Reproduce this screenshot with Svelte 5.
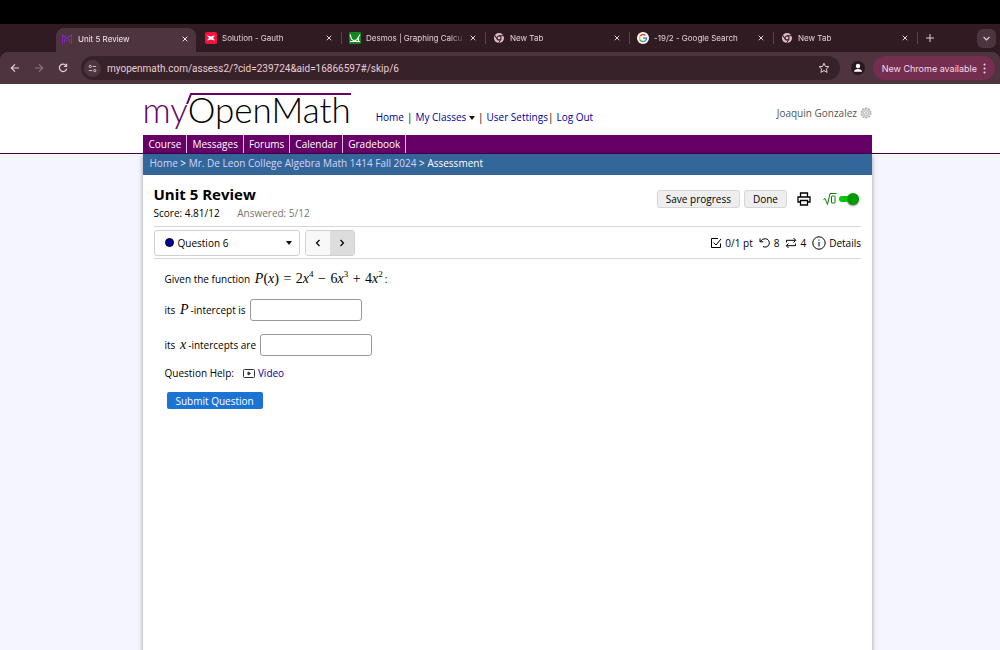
<script lang="ts">
	type Tab = {
		id: number;
		title: string;
		icon: 'mom' | 'gauth' | 'desmos' | 'chrome' | 'google';
	};

	const tabs: Tab[] = [
		{ id: 1, title: 'Unit 5 Review', icon: 'mom' },
		{ id: 2, title: 'Solution - Gauth', icon: 'gauth' },
		{ id: 3, title: 'Desmos | Graphing Calcu', icon: 'desmos' },
		{ id: 4, title: 'New Tab', icon: 'chrome' },
		{ id: 5, title: '-19/2 - Google Search', icon: 'google' },
		{ id: 6, title: 'New Tab', icon: 'chrome' }
	];

	const menu = ['Course', 'Messages', 'Forums', 'Calendar', 'Gradebook'];

	let activeTab = $state(1);
	let address = $state('myopenmath.com/assess2/?cid=239724&aid=16866597#/skip/6');
	let question = $state(6);
	let yIntercept = $state('');
	let xIntercepts = $state('');
	let mathEntry = $state(true);
</script>

<div class="screen-top"></div>

<div class="browser">
	<div class="tab-strip">
		{#each tabs as tab (tab.id)}
			<div class="tab" class:active={tab.id === activeTab}>
				<button class="tab-title" onclick={() => (activeTab = tab.id)}>
					<svg class="favicon" viewBox="0 0 12 12" aria-hidden="true">
						{#if tab.icon === 'mom'}
							<path d="M1.500 11V2L6 6l4.500-4v9M3.500 10V6L6 8.500 8.500 6v4" fill="none" stroke="#8a22b8" />
							<path d="M1 1.500l5 3.500 5-3.500" fill="none" stroke="#5b3fc0" stroke-width=".7" />
						{:else if tab.icon === 'gauth'}
							<rect width="12" height="12" rx="2" fill="#f5123f" />
							<path d="M2 3.500c2 0 3 1 4 1s2-1 4-1L8 6l2 2.500c-2 0-3-1-4-1s-2 1-4 1L4 6z" fill="#fff" />
						{:else if tab.icon === 'desmos'}
							<rect width="12" height="12" rx="1" fill="#12891f" />
							<path d="M1 2.500l1.500 4.500L5 9l3-1.500 3-5M1 9.500h10M9.500 5v4.500" fill="none" stroke="#fff" stroke-width="1.100" />
						{:else if tab.icon === 'chrome'}
							<circle cx="6" cy="6" r="5" fill="#dfbcc8" />
							<circle cx="6" cy="6" r="2" fill="#dfbcc8" stroke="#311b23" stroke-width="1.100" />
							<path d="M6 3.700h5M4 7.100L1.600 3M8 7.100L5.600 11" stroke="#311b23" stroke-width="1" />
						{:else}
							<circle cx="6" cy="6" r="6" fill="#fff" />
							<g fill="none" stroke-width="1.500">
								<path d="M8.500 3.500A3.500 3.500 0 0 0 3 4.200" stroke="#ea4335" />
								<path d="M3 4.200a3.500 3.500 0 0 0 0 3.600" stroke="#fbbc05" />
								<path d="M3 7.800a3.500 3.500 0 0 0 5.300.9" stroke="#34a853" />
								<path d="M8.300 8.700A3.500 3.500 0 0 0 9.500 6H6" stroke="#4285f4" />
							</g>
						{/if}
					</svg>
					<span>{tab.title}</span>
				</button>
				<button class="tab-close" aria-label="Close tab">
					<svg viewBox="0 0 6 6"><path d="M.7.7l4.600 4.600M5.300.7L.7 5.300" /></svg>
				</button>
			</div>
		{/each}
		<button class="new-tab" aria-label="New tab">
			<svg viewBox="0 0 8 8"><path d="M4 0v8M0 4h8" /></svg>
		</button>
		<button class="tab-search" aria-label="Search tabs">
			<svg viewBox="0 0 6 6"><path d="M.5 1.700L3 4.200l2.500-2.500" /></svg>
		</button>
	</div>

	<div class="toolbar">
		<button class="tool" aria-label="Back">
			<svg viewBox="0 0 10 10"><path d="M9 5H1.500M5 1.300L1.300 5 5 8.700" /></svg>
		</button>
		<button class="tool dim" aria-label="Forward">
			<svg viewBox="0 0 10 10"><path d="M1 5h7.500M5 1.300L8.700 5 5 8.700" /></svg>
		</button>
		<button class="tool" aria-label="Reload">
			<svg viewBox="0 0 10 10"><path d="M8.300 3A3.700 3.700 0 1 0 8.700 5.600M8.600.8v2.700H5.900" /></svg>
		</button>
		<div class="address">
			<button class="site-info" aria-label="View site information">
				<svg viewBox="0 0 10 10">
					<circle cx="2.500" cy="2.700" r="1.200" /><path d="M5.200 2.700H9M1 7.300h3.800" /><circle cx="7.500" cy="7.300" r="1.200" />
				</svg>
			</button>
			<input type="text" aria-label="Address" bind:value={address} />
			<button class="star" aria-label="Bookmark this tab">
				<svg viewBox="0 0 12 12"><path d="M6 1.200l1.400 3.200 3.500.3-2.600 2.300.8 3.400L6 8.600l-3.100 1.800.8-3.400L1.100 4.700l3.500-.3z" /></svg>
			</button>
		</div>
		<button class="profile" aria-label="Profile">
			<svg viewBox="0 0 14 14">
				<circle cx="7" cy="7" r="7" fill="#2b171e" />
				<circle cx="7" cy="5" r="2.200" fill="#fff" />
				<path d="M3 10.800c0-2 2-2.900 4-2.900s4 .9 4 2.900z" fill="#fff" />
			</svg>
		</button>
		<button class="update">
			New Chrome available
			<svg viewBox="0 0 3 11"><circle cx="1.500" cy="1.500" r="1" /><circle cx="1.500" cy="5.500" r="1" /><circle cx="1.500" cy="9.500" r="1" /></svg>
		</button>
	</div>
</div>

<div class="page">
	<header>
		<div class="wrap">
			<div class="head-row">
				<a class="logo" href="#home">
					<span>my</span>OpenMath
					<svg viewBox="0 0 165 11" aria-hidden="true"><path d="M1 11L5 1h160" /></svg>
				</a>
				<nav class="links">
					<a href="#home">Home</a><i>|</i>
					<a href="#classes">My Classes <b class="caret"></b></a><i>|</i>
					<a href="#settings">User Settings</a><i class="tight">|</i>
					<a href="#logout">Log Out</a>
				</nav>
				<div class="user">
					Joaquin Gonzalez
					<svg viewBox="0 0 12 12" aria-hidden="true">
						<circle cx="6" cy="6" r="4.800" fill="#d6d8d6" stroke="#b2b5b2" stroke-width="1.400" stroke-dasharray="2 1" />
						<circle cx="6" cy="6" r="2.500" fill="#ededed" stroke="#aeb1ae" stroke-width=".7" />
						<circle cx="6" cy="6" r="1" fill="#bfc2bf" />
					</svg>
				</div>
			</div>
			<nav class="menu">
				{#each menu as item}
					<a href="#{item.toLowerCase()}">{item}</a>
				{/each}
			</nav>
		</div>
	</header>

	<main class="wrap">
		<nav class="crumbs">
			<a href="#home">Home</a> &gt; <a href="#course">Mr. De Leon College Algebra Math 1414 Fall 2024</a> &gt; Assessment
		</nav>

		<div class="assess">
			<div class="title-row">
				<div class="title">
					<h1>Unit 5 Review</h1>
					<p>Score: 4.81/12 <span>Answered: 5/12</span></p>
				</div>
				<div class="actions">
					<button class="plain">Save progress</button>
					<button class="plain">Done</button>
					<button class="print" aria-label="Print">
						<svg viewBox="0 0 14 14">
							<path d="M3.500 5V1h7v4M3.500 10H1V5h12v5h-2.500M3.500 8.500h7V13h-7z" />
						</svg>
					</button>
					<label class="entry">
						<input type="checkbox" aria-label="Equation editor" bind:checked={mathEntry} />
						<svg class="root" viewBox="0 0 14 14" aria-hidden="true">
							<path d="M.5 7.500L2 6.500l2.500 6L7 1.500h6.500" />
							<rect x="8.500" y="4" width="3.500" height="7" rx=".5" />
						</svg>
						<span class="track"></span>
					</label>
				</div>
			</div>

			<div class="question-row">
				<div class="picker">
					<span class="dot"></span>
					<select aria-label="Question" bind:value={question}>
						{#each Array(12) as _, i}
							<option value={i + 1}>Question {i + 1}</option>
						{/each}
					</select>
					<b class="caret"></b>
				</div>
				<div class="steps">
					<button aria-label="Previous question" onclick={() => (question = Math.max(1, question - 1))}>
						<svg viewBox="0 0 6 8"><path d="M4.500 1L1.500 4l3 3" /></svg>
					</button>
					<button class="next" aria-label="Next question" onclick={() => (question = Math.min(12, question + 1))}>
						<svg viewBox="0 0 6 8"><path d="M1.500 1l3 3-3 3" /></svg>
					</button>
				</div>
				<div class="info">
					<span>
						<svg viewBox="0 0 12 12"><path d="M10.500 6.500v4h-9v-9H8M3.500 5.500L6 8l5-6" /></svg>
						0/1 pt
					</span>
					<span>
						<svg viewBox="0 0 12 12"><path d="M1 1.500v3.300h3.300M1.300 4.500Q3 1.700 6.300 1.700A4.200 4.200 0 1 1 4 9.500" /></svg>
						8
					</span>
					<span>
						<svg viewBox="0 0 12 12"><path d="M1.500 5.500V3.300h9M8.500 1l2.200 2.300-2.200 2.200M10.500 6.500v2.200h-9M3.500 6.500L1.300 8.700l2.200 2.300" /></svg>
						4
					</span>
					<button class="details">
						<svg viewBox="0 0 14 14"><circle cx="7" cy="7" r="6.200" /><path d="M7 6v4.500M7 3.500v1.200" /></svg>
						Details
					</button>
				</div>
			</div>

			<form class="question" onsubmit={(e) => e.preventDefault()}>
				<p>
					Given the function
					<span class="math"
						><em>P</em>(<em>x</em>) <b>=</b> 2<em>x</em><sup>4</sup> <b>−</b> 6<em>x</em><sup>3</sup> <b>+</b> 4<em>x</em><sup>2</sup></span
					>:
				</p>
				<div class="answer">
					<label for="p-int">its <span class="math"><em>P</em></span>-intercept is</label>
					<input id="p-int" type="text" bind:value={yIntercept} />
				</div>
				<div class="answer">
					<label for="x-int">its <span class="math"><em>x</em></span>-intercepts are</label>
					<input id="x-int" type="text" bind:value={xIntercepts} />
				</div>
				<div class="help">
					<span>Question Help:</span>
					<a href="#video">
						<svg viewBox="0 0 12 9"><rect x=".5" y=".5" width="11" height="8" rx="1" /><path d="M5 3v3l2.500-1.500z" fill="#333" /></svg>
						Video
					</a>
				</div>
				<button class="submit">Submit Question</button>
			</form>
		</div>
	</main>
</div>

<style>
	:global(body) {
		background: #f5f5ff;
	}

	:global(#app) {
		min-height: 100vh;
		display: flex;
		flex-direction: column;
	}

	button,
	input,
	select {
		font: inherit;
		color: inherit;
		margin: 0;
		padding: 0;
		border: 0;
		background: none;
	}

	button {
		cursor: pointer;
	}

	svg {
		display: block;
		flex: none;
		fill: none;
		stroke: currentColor;
	}

	.screen-top {
		height: 24px;
		background: #000;
	}

	/* Browser chrome */
	.browser {
		font-family: Inter, sans-serif;
		font-size: 8px;
		color: #e8cdd6;
		background: #311b23;
	}

	.tab-strip {
		display: flex;
		align-items: center;
		height: 28px;
		padding: 0 4px 0 54px;
	}

	.tab {
		flex: 0 1 144px;
		min-width: 0;
		display: flex;
		align-items: center;
		gap: 4px;
		height: 12px;
		padding: 0 9px 0 7px;
		box-sizing: border-box;
		border-right: 1px solid #5c424c;
	}

	.tab.active {
		height: 24px;
		margin: 4px 2px 0;
		flex-basis: 140px;
		padding: 0 8px 3px 5px;
		border: 0;
		border-radius: 8px 8px 0 0;
		background: #4e343e;
		color: #fbe6ee;
	}

	.tab-title {
		flex: 1;
		min-width: 0;
		display: flex;
		align-items: center;
		gap: 5px;
		text-align: left;
	}

	.tab-title span {
		flex: 1;
		white-space: nowrap;
		mask-image: linear-gradient(to right, #000 84%, transparent);
	}

	.favicon {
		width: 12px;
		height: 12px;
		stroke: none;
	}

	.tab-close svg {
		width: 6px;
		height: 6px;
	}

	.new-tab {
		margin-left: 8px;
	}

	.new-tab svg {
		width: 8px;
		height: 8px;
	}

	.tab-search {
		margin-left: auto;
		padding: 6px;
		border-radius: 6px;
		background: #4e343e;
	}

	.tab-search svg {
		width: 7px;
		height: 7px;
	}

	.toolbar {
		display: flex;
		align-items: center;
		height: 32px;
		padding: 0 5px 0 10px;
		gap: 14px;
		border-radius: 8px 8px 0 0;
		background: #4e343e;
	}

	.tool svg {
		width: 10px;
		height: 10px;
		stroke-width: 1.2;
	}

	.dim {
		color: #90747f;
	}

	.address {
		flex: 1;
		display: flex;
		align-items: center;
		gap: 6px;
		height: 24px;
		margin-left: -1px;
		padding: 0 10px 0 3px;
		border-radius: 12px;
		background: #38222a;
	}

	.address input {
		flex: 1;
		min-width: 0;
		font-family: Roboto, sans-serif;
		font-size: 10px;
		outline: none;
	}

	.site-info {
		padding: 4px;
		border-radius: 50%;
		background: #4e343e;
	}

	.site-info svg {
		width: 9px;
		height: 9px;
	}

	.star svg {
		width: 12px;
		height: 12px;
	}

	.profile {
		margin-left: -3px;
	}

	.profile svg {
		width: 14px;
		height: 14px;
		stroke: none;
	}

	.update {
		display: flex;
		align-items: center;
		gap: 6px;
		height: 24px;
		margin-left: -6px;
		padding: 0 9px;
		border-radius: 12px;
		background: #732e50;
		color: #f9d8e6;
		font-size: 9px;
	}

	.update svg {
		width: 3px;
		height: 11px;
		fill: currentColor;
		stroke: none;
	}

	/* Page */
	.page {
		flex: 1;
		display: flex;
		flex-direction: column;
		font-family: 'Trebuchet MS', 'Open Sans', sans-serif;
		font-size: 10px;
		font-weight: 500;
		color: #000;
	}

	a {
		color: #0000a0;
		text-decoration: none;
	}

	header {
		background: #fff;
		border-bottom: 1px solid #3d0040;
	}

	.wrap {
		margin: 0 12.8% 0 14.25%;
	}

	.head-row {
		display: flex;
		height: 51px;
	}

	.logo {
		position: relative;
		font: 300 35px/50px Lato, sans-serif;
		color: #000;
	}

	.logo span {
		color: #606;
	}

	.logo svg {
		position: absolute;
		top: 9px;
		right: 0;
		width: 165px;
		height: 11px;
		stroke: #606;
		stroke-width: 2;
	}

	.links {
		display: flex;
		gap: 3px;
		margin-left: 25px;
		padding-top: 26px;
	}

	.links i {
		font-style: normal;
	}

	.links .tight {
		margin-left: -3px;
	}

	.caret {
		display: inline-block;
		border: 3px solid transparent;
		border-top: 4px solid #111;
		border-bottom: 0;
		vertical-align: middle;
	}

	.user {
		display: flex;
		gap: 3px;
		margin-left: auto;
		padding-top: 22px;
		color: #555;
	}

	.user svg {
		width: 12px;
		height: 12px;
		margin-top: 1px;
		stroke: none;
	}

	.menu {
		display: flex;
		height: 18px;
		padding-left: 1px;
		background: #606;
		line-height: 18px;
	}

	.menu a {
		padding: 0 5px;
		border-right: 1px solid #d9c2d9;
		color: #fff;
	}

	main {
		flex: 1;
		background: #fff;
		box-shadow: 0 3px 4px 1px #b4b4bc;
		clip-path: inset(0 -8px);
	}

	.crumbs {
		height: 21px;
		padding-left: 7px;
		background: #369;
		color: #fff;
		line-height: 18px;
	}

	.crumbs a {
		color: #d5d5ff;
	}

	.assess {
		padding: 0 11px;
	}

	.title-row {
		display: flex;
		justify-content: space-between;
		height: 51px;
		border-bottom: 1px solid #d8d8d8;
	}

	.title {
		padding-top: 9px;
	}

	h1 {
		margin: 0;
		font-size: 15px;
		line-height: 20px;
	}

	.title p {
		margin: 0;
		line-height: 18px;
	}

	.title p span {
		margin-left: 15px;
		color: #757575;
	}

	.actions {
		display: flex;
		align-items: center;
		gap: 4px;
		height: 48px;
	}

	.plain {
		height: 18px;
		padding: 0 8px;
		border: 1px solid #d6d6d6;
		border-radius: 3px;
		background: #eee;
	}

	.print {
		margin: 0 8px 0 6px;
	}

	.print svg {
		width: 14px;
		height: 14px;
		stroke-width: 1.3;
	}

	.entry {
		display: flex;
		align-items: center;
		gap: 2px;
		margin-right: 2px;
		color: #008000;
		cursor: pointer;
	}

	.entry input {
		position: absolute;
		opacity: 0;
	}

	.root {
		width: 14px;
		height: 14px;
	}

	.track {
		position: relative;
		width: 20px;
		height: 6px;
		border-radius: 3px;
		background: #0c0;
	}

	.track::after {
		content: '';
		position: absolute;
		top: -3px;
		right: 0;
		width: 12px;
		height: 12px;
		border-radius: 50%;
		background: #090;
		box-shadow: 0 1px 2px #888;
	}

	.question-row {
		display: flex;
		align-items: center;
		gap: 5px;
		height: 31px;
		border-bottom: 1px solid #d8d8d8;
	}

	.picker {
		display: flex;
		align-items: center;
		width: 146px;
		height: 26px;
		padding: 0 7px 0 10px;
		box-sizing: border-box;
		border: 1px solid #d0d0d0;
		border-radius: 3px;
	}

	.picker select {
		flex: 1;
		padding-left: 4px;
		appearance: none;
		outline: none;
	}

	.dot {
		width: 7px;
		height: 7px;
		border: 1px solid #000;
		border-radius: 50%;
		background: #0000a8;
	}

	.steps {
		display: flex;
		height: 24px;
		border: 1px solid #d0d0d0;
		border-radius: 3px;
		overflow: hidden;
	}

	.steps button {
		display: flex;
		align-items: center;
		justify-content: center;
		width: 24px;
		background: #f8f8f8;
	}

	.steps .next {
		background: #ddd;
	}

	.steps svg {
		width: 6px;
		height: 8px;
		stroke-width: 1.2;
	}

	.info {
		display: flex;
		align-items: center;
		gap: 6px;
		margin-left: auto;
	}

	.info span,
	.details {
		display: flex;
		align-items: center;
		gap: 3px;
	}

	.info svg {
		width: 12px;
		height: 12px;
	}

	.info .details svg {
		width: 14px;
		height: 14px;
	}

	.question {
		padding: 10px 11px;
	}

	.question p {
		margin: 0 0 10px;
		line-height: 20px;
	}

	.math {
		padding: 0 2px;
		font-family: 'Liberation Serif', serif;
		font-size: 14px;
		line-height: 14px;
	}

	.math b {
		padding: 0 1px;
		font-weight: 400;
	}

	.math sup {
		font-size: 9px;
		line-height: 0;
	}

	.answer {
		display: flex;
		align-items: center;
		gap: 4px;
		margin-bottom: 13px;
	}

	.answer input {
		width: 100px;
		height: 20px;
		padding: 0 5px;
		border: 1px solid #999;
		border-radius: 3px;
	}

	.help {
		display: flex;
		align-items: center;
		gap: 9px;
		margin: -3px 0 12px;
	}

	.help a {
		display: flex;
		align-items: center;
		gap: 3px;
	}

	.help svg {
		width: 12px;
		height: 9px;
		stroke: #333;
	}

	.submit {
		height: 17px;
		margin-left: 2px;
		padding: 0 9px;
		border-radius: 2px;
		background: #1b74d4;
		color: #fff;
	}
</style>
